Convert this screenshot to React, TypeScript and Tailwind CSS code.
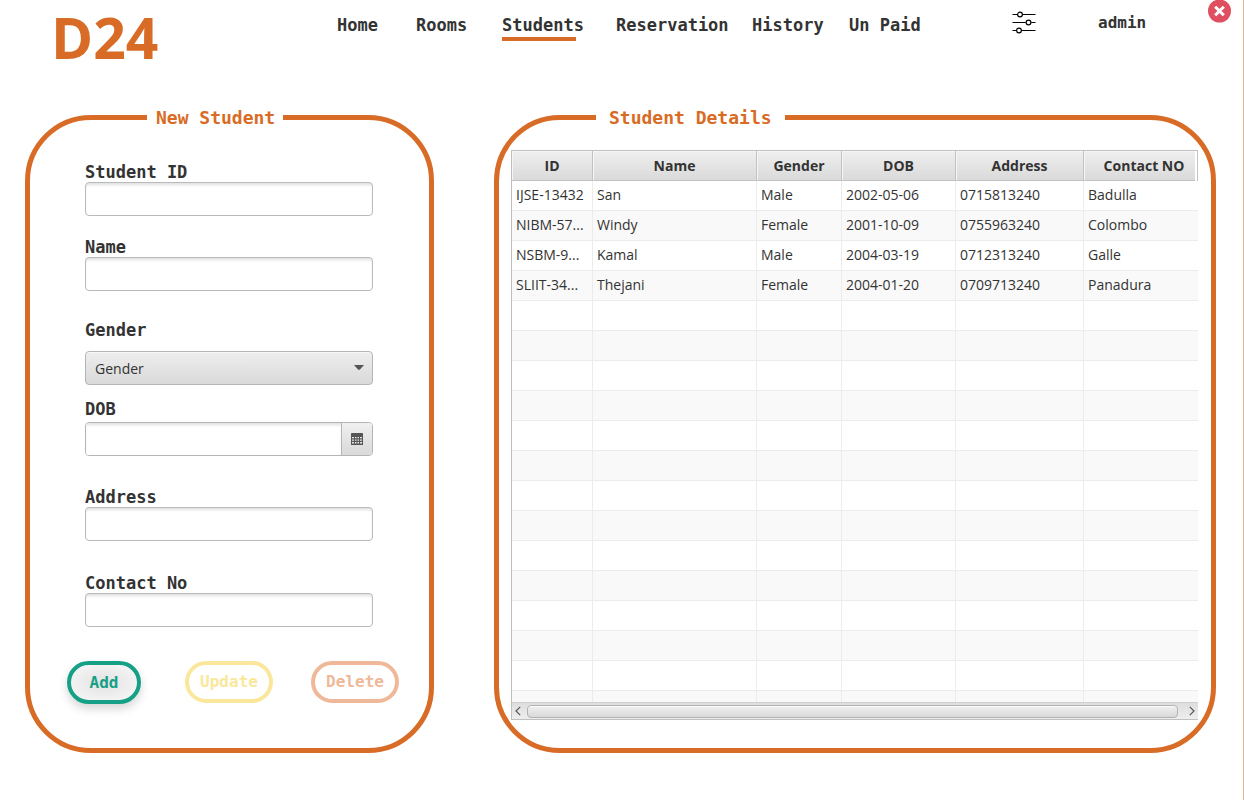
import type { ReactNode } from "react";

const MONO = "font-['DejaVu_Sans_Mono',monospace] font-bold";

const columns = [
  { title: "ID", width: "w-[81px]" },
  { title: "Name", width: "w-[164px]" },
  { title: "Gender", width: "w-[85px]" },
  { title: "DOB", width: "w-[114px]" },
  { title: "Address", width: "w-[128px]" },
  { title: "Contact NO", width: "w-[121px]" },
];

const students = [
  ["IJSE-13432", "San", "Male", "2002-05-06", "0715813240", "Badulla"],
  ["NIBM-57...", "Windy", "Female", "2001-10-09", "0755963240", "Colombo"],
  ["NSBM-9...", "Kamal", "Male", "2004-03-19", "0712313240", "Galle"],
  ["SLIIT-34...", "Thejani", "Female", "2004-01-20", "0709713240", "Panadura"],
];

const emptyRow = ["", "", "", "", "", ""];
const rows = [...students, ...Array.from({ length: 14 }, () => emptyRow)];

const boxClass =
  "h-[34px] w-full rounded-[4px] border border-[#bababa] bg-white px-2 text-sm text-[#333] shadow-[inset_0_3px_3px_-1px_rgba(0,0,0,0.12)] outline-none";

function Field({ id, label, gap, children }: { id: string; label: string; gap: string; children: ReactNode }) {
  return (
    <div className={`flex flex-col ${gap}`}>
      <label htmlFor={id} className={`${MONO} self-start text-[17px] leading-[20px] text-[#333]`}>
        {label}
      </label>
      {children}
    </div>
  );
}

function NavLink({ label, active }: { label: string; active?: boolean }) {
  return (
    <a href="#" className={`${MONO} flex flex-col items-start pt-[13px] text-[17px] leading-[24px] whitespace-nowrap text-[#333]`}>
      {label}
      {active && <span className="h-[4px] w-[74px] bg-[#d86c26]" />}
    </a>
  );
}

function Header() {
  return (
    <header className="relative grid h-[105px] grid-cols-[51fr_286fr_79fr_86fr_114fr_136fr_97fr_163fr_86fr_145fr] items-start">
      <h1 className="col-start-2 font-['Open_Sans',sans-serif] text-[57px] leading-[74px] font-bold text-[#d86c26]">D24</h1>
      <NavLink label="Home" />
      <NavLink label="Rooms" />
      <NavLink label="Students" active />
      <NavLink label="Reservation" />
      <NavLink label="History" />
      <NavLink label="Un Paid" />
      <button type="button" aria-label="Settings" className="w-6 pt-2.5">
        <svg viewBox="0 0 24 24" className="size-6" fill="none" stroke="#000" strokeWidth="1.2">
          <path d="M0.5 4.5H5.2M10.8 4.5H23.5M0.5 12.5H13.7M19.3 12.5H23.5M0.5 20.5H4.2M9.8 20.5H23.5" />
          <circle cx="8" cy="4.5" r="2.4" />
          <circle cx="16.5" cy="12.5" r="2.4" />
          <circle cx="7" cy="20.5" r="2.4" />
        </svg>
      </button>
      <a href="#" className={`${MONO} pt-[11px] text-[16px] leading-[24px] text-[#333]`}>
        admin
      </a>
      <button type="button" aria-label="Close" className="absolute top-0 right-3 size-[23px]">
        <svg viewBox="0 0 23 23" className="size-[23px]">
          <circle cx="11.5" cy="11" r="11.5" fill="#e04f5f" />
          <path d="M7.2 6.7L15.8 15.3M15.8 6.7L7.2 15.3" stroke="#fff" strokeWidth="3" />
        </svg>
      </button>
    </header>
  );
}

function StudentForm() {
  return (
    <fieldset className="h-[648px] min-w-0 rounded-[66px] border-[5px] border-[#d86c26]">
      <legend className={`${MONO} ml-[117px] pr-2 pl-[9px] pt-px text-[18px] leading-[24px] text-[#d86c26]`}>New Student</legend>
      <form className="flex flex-col pt-8">
        <div className="flex flex-col pr-14 pl-[55px]">
          <Field id="student-id" label="Student ID" gap="">
            <input id="student-id" type="text" className={boxClass} />
          </Field>
          <div className="h-[21px]" />
          <Field id="name" label="Name" gap="">
            <input id="name" type="text" className={boxClass} />
          </Field>
          <div className="h-[29px]" />
          <Field id="gender" label="Gender" gap="gap-[11px]">
            <div className="relative">
              <select
                id="gender"
                defaultValue=""
                className="h-[34px] w-full appearance-none rounded-[4px] border border-[#b5b5b5] bg-linear-to-b from-[#eeeeee] to-[#d9d9d9] px-[9px] font-['Open_Sans',sans-serif] text-[14px] text-[#333] shadow-[inset_0_1px_0_#f8f8f8] outline-none"
              >
                <option value="">Gender</option>
                <option>Male</option>
                <option>Female</option>
              </select>
              <svg viewBox="0 0 10 5" className="pointer-events-none absolute top-[14px] right-[9px] h-[5px] w-[10px]">
                <path d="M0 0H10L6.2 4.2Q5 5.4 3.8 4.2Z" fill="#555" />
              </svg>
            </div>
          </Field>
          <div className="h-[14px]" />
          <Field id="dob" label="DOB" gap="gap-[3px]">
            <div className="flex h-[34px] overflow-hidden rounded-[4px] border border-[#b5b5b5]">
              <input
                id="dob"
                type="text"
                className="min-w-0 flex-1 bg-white px-2 text-sm text-[#333] shadow-[inset_0_3px_3px_-1px_rgba(0,0,0,0.12)] outline-none"
              />
              <button
                type="button"
                aria-label="Pick a date"
                className="flex w-[31px] items-center justify-center border-l border-[#b5b5b5] bg-linear-to-b from-[#f0f0f0] to-[#d9d9d9]"
              >
                <svg viewBox="0 0 12 12" className="size-3">
                  <rect width="12" height="12" rx="0.6" fill="#555" />
                  <path
                    d="M1 4H3V5.3H1ZM4 4H5.5V5.3H4ZM6.5 4H8V5.3H6.5ZM9 4H11V5.3H9ZM1 6.4H3V7.8H1ZM4 6.4H5.5V7.8H4ZM6.5 6.4H8V7.8H6.5ZM9 6.4H11V7.8H9ZM1 9H3V10.5H1ZM4 9H5.5V10.5H4ZM6.5 9H8V10.5H6.5ZM9 9H11V10.5H9Z"
                    fill="#e4e4e4"
                  />
                </svg>
              </button>
            </div>
          </Field>
          <div className="h-[31px]" />
          <Field id="address" label="Address" gap="">
            <input id="address" type="text" className={boxClass} />
          </Field>
          <div className="h-8" />
          <Field id="contact" label="Contact No" gap="">
            <input id="contact" type="text" className={boxClass} />
          </Field>
        </div>
        <div className={`${MONO} mt-[34px] grid grid-cols-[118fr_126fr_89fr] items-start justify-items-start pr-[29px] pl-[37px] text-[16px] leading-[34px]`}>
          <button
            type="button"
            className="h-[43px] w-[74px] rounded-[22px] border-4 border-[#16a085] bg-radial from-[#e2e2e2] to-[#f9f9f9] text-[#16a085] shadow-[0_5px_10px_rgba(0,0,0,0.16)]"
          >
            Add
          </button>
          <button type="button" className="h-[42px] w-[88px] rounded-[21px] border-4 border-[#fae79b] text-[#fae79b]">
            Update
          </button>
          <button type="button" className="h-[42px] w-[88px] rounded-[21px] border-4 border-[#efb999] text-[#efb999]">
            Delete
          </button>
        </div>
      </form>
    </fieldset>
  );
}

function StudentTable() {
  return (
    <fieldset className="h-[648px] min-w-0 rounded-[66px] border-[5px] border-[#d86c26]">
      <legend className={`${MONO} ml-[97px] px-[13px] pt-px text-[18px] leading-[24px] text-[#d86c26]`}>Student Details</legend>
      <div className="mt-5 mr-[13px] ml-3 border-y border-l border-[#c0c0c0] font-['Open_Sans',sans-serif] text-[14px] text-[#333]">
        <div className="relative h-[551px] overflow-hidden">
          <table className="w-[calc(100%+7px)] table-fixed border-separate border-spacing-0">
            <thead>
              <tr className="h-[30px]">
                {columns.map((c) => (
                  <th
                    key={c.title}
                    className={`${c.width} h-[30px] border-r border-b border-[#c3c3c3] bg-linear-to-b from-[#efefef] to-[#dadada] p-0 leading-[29px] font-bold shadow-[inset_1px_1px_0_#f5f5f5]`}
                  >
                    {c.title}
                  </th>
                ))}
              </tr>
            </thead>
            <tbody>
              {rows.map((row, i) => (
                <tr key={i} className="h-[30px] bg-white even:bg-[#f9f9f9]">
                  {row.map((cell, j) => (
                    <td key={j} className="h-[30px] overflow-hidden border-r border-b border-[#ececec] py-0 pr-0 pl-1 align-top leading-[27px] whitespace-nowrap">
                      {cell}
                    </td>
                  ))}
                </tr>
              ))}
            </tbody>
          </table>
          <span className="absolute top-0 right-0 h-[30px] w-[3px] border-r border-[#c3c3c3] bg-white" />
        </div>
        <div className="flex h-[17px] items-center border-t border-[#cfcfcf] bg-linear-to-b from-[#dedede] to-[#eeeeee]">
          <button type="button" aria-label="Scroll left" className="flex h-4 w-[15px] items-center justify-start pl-[3px]">
            <svg viewBox="0 0 6 10" className="h-[10px] w-[6px]" fill="none" stroke="#555" strokeWidth="1.2">
              <path d="M5.2 0.8L1 5L5.2 9.2" />
            </svg>
          </button>
          <div className="h-[13px] flex-1 rounded-[4px] border border-[#b2b2b2] bg-linear-to-b from-[#f0f0f0] to-[#d9d9d9] shadow-[inset_0_1px_0_#fafafa]" />
          <button type="button" aria-label="Scroll right" className="flex h-4 w-5 items-center justify-end pr-[3px]">
            <svg viewBox="0 0 6 10" className="h-[10px] w-[6px]" fill="none" stroke="#555" strokeWidth="1.2">
              <path d="M0.8 0.8L5 5L0.8 9.2" />
            </svg>
          </button>
        </div>
      </div>
    </fieldset>
  );
}

export default function App() {
  return (
    <div className="min-h-screen border-r border-[#e3b698] bg-white">
      <Header />
      <main className="grid grid-cols-[409fr_722fr] gap-[60px] pr-[27px] pl-[25px]">
        <StudentForm />
        <StudentTable />
      </main>
    </div>
  );
}
